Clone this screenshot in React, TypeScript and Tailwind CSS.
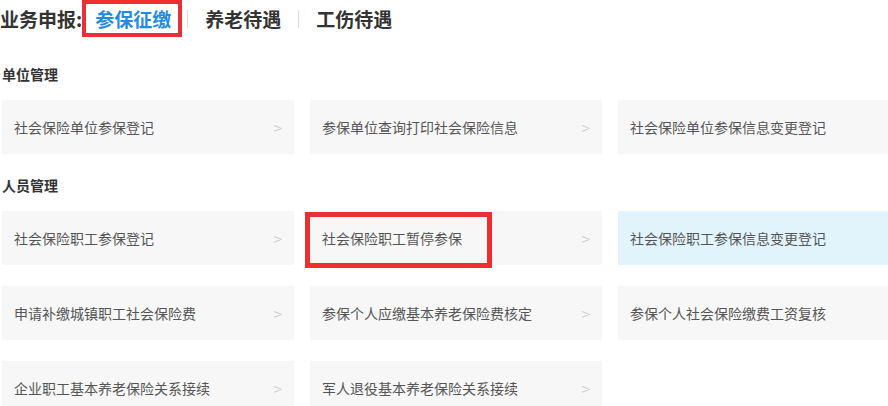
const unitItems = ['社会保险单位参保登记', '参保单位查询打印社会保险信息', '社会保险单位参保信息变更登记'];

const personItems = [
  '社会保险职工参保登记',
  '社会保险职工暂停参保',
  '社会保险职工参保信息变更登记',
  '申请补缴城镇职工社会保险费',
  '参保个人应缴基本养老保险费核定',
  '参保个人社会保险缴费工资复核',
  '企业职工基本养老保险关系接续',
  '军人退役基本养老保险关系接续',
];

function Card({ label, active, marked }: { label: string; active?: boolean; marked?: boolean }) {
  return (
    <div
      className={`relative h-[54px] flex items-center justify-between pl-[12px] pr-[12px] text-[14px] text-[#555] ${
        active ? 'bg-[#e1f3fb]' : 'bg-[#f7f7f7]'
      }`}
    >
      <span>{label}</span>
      <span className="text-[16px] font-light text-[#c8c8c8]">&gt;</span>
      {marked && (
        <div className="absolute left-[-5px] top-[1px] w-[187px] h-[56px] border-[5px] border-[#ec2f33]" />
      )}
    </div>
  );
}

export default function App() {
  return (
    <div className="w-[888px] h-[406px] overflow-hidden bg-white font-['Noto_Sans_CJK_SC',sans-serif]">
      <div className="h-[37px] flex items-center text-[19px] font-bold text-[#333]">
        <span className="leading-[27px]">业务申报:</span>
        <span className="relative ml-[13px] leading-[27px] text-[#1f8be6]">
          参保征缴
          <span className="absolute left-[-13px] top-[-5px] w-[100px] h-[37px] border-4 border-[#ec2f33]" />
        </span>
        <span className="ml-[16px] w-px h-[18px] bg-[#dddddd]" />
        <span className="ml-[17px] leading-[27px]">养老待遇</span>
        <span className="ml-[17px] w-px h-[18px] bg-[#dddddd]" />
        <span className="ml-[17px] leading-[27px]">工伤待遇</span>
      </div>

      <h3 className="mt-[28px] pl-[2px] text-[14px] leading-[18px] font-bold text-[#333]">单位管理</h3>
      <div className="mt-[17px] pl-[2px] grid grid-cols-[292px_292px_292px] gap-x-[16px]">
        {unitItems.map((t) => (
          <Card key={t} label={t} />
        ))}
      </div>

      <h3 className="mt-[22px] pl-[2px] text-[14px] leading-[18px] font-bold text-[#333]">人员管理</h3>
      <div className="mt-[17px] pl-[2px] grid grid-cols-[292px_292px_292px] gap-x-[16px] gap-y-[21px]">
        {personItems.map((t, i) => (
          <Card key={t} label={t} active={i === 2} marked={i === 1} />
        ))}
      </div>
    </div>
  );
}
